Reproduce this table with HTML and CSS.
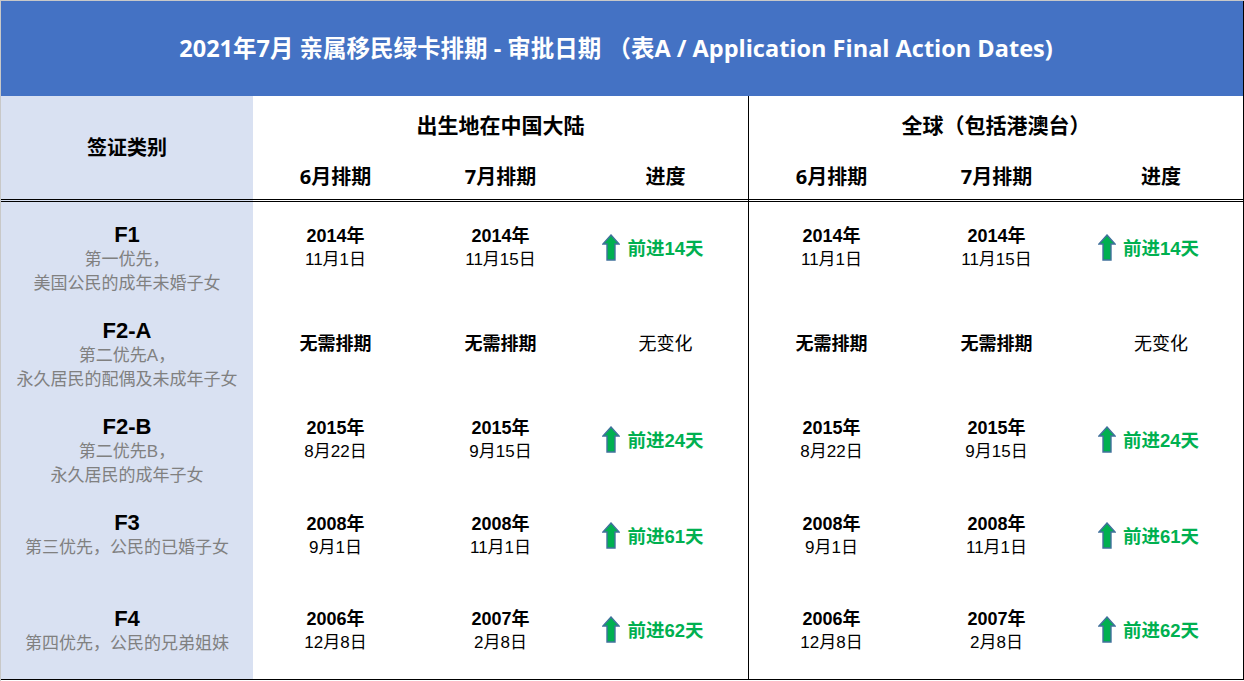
FILE: index.html
```html
<!DOCTYPE html>
<html lang="zh-CN">
<head>
<meta charset="utf-8">
<title>2021年7月 亲属移民绿卡排期</title>
<link rel="stylesheet" href="styles.css">
</head>
<body>
<div class="sheet">
  <div class="title">2021年7月 亲属移民绿卡排期 - 审批日期 （表A / Application Final Action Dates)</div>
  <div class="grid">
    <div class="hcat">签证类别</div>
    <div class="hgroup g1">出生地在中国大陆</div>
    <div class="hgroup g2">全球（包括港澳台）</div>
    <div class="hsub">6月排期</div>
    <div class="hsub">7月排期</div>
    <div class="hsub">进度</div>
    <div class="hsub sep">6月排期</div>
    <div class="hsub">7月排期</div>
    <div class="hsub">进度</div>

    <div class="cat"><div class="code">F1</div><div class="desc">第一优先，<br>美国公民的成年未婚子女</div></div>
    <div class="cell"><b>2014年</b><span class="day">11月1日</span></div>
    <div class="cell"><b>2014年</b><span class="day">11月15日</span></div>
    <div class="cell"><span class="up">前进14天</span></div>
    <div class="cell sep"><b>2014年</b><span class="day">11月1日</span></div>
    <div class="cell"><b>2014年</b><span class="day">11月15日</span></div>
    <div class="cell"><span class="up">前进14天</span></div>

    <div class="cat"><div class="code">F2-A</div><div class="desc">第二优先A，<br>永久居民的配偶及未成年子女</div></div>
    <div class="cell"><b>无需排期</b></div>
    <div class="cell"><b>无需排期</b></div>
    <div class="cell"><span>无变化</span></div>
    <div class="cell sep"><b>无需排期</b></div>
    <div class="cell"><b>无需排期</b></div>
    <div class="cell"><span>无变化</span></div>

    <div class="cat"><div class="code">F2-B</div><div class="desc">第二优先B，<br>永久居民的成年子女</div></div>
    <div class="cell"><b>2015年</b><span class="day">8月22日</span></div>
    <div class="cell"><b>2015年</b><span class="day">9月15日</span></div>
    <div class="cell"><span class="up">前进24天</span></div>
    <div class="cell sep"><b>2015年</b><span class="day">8月22日</span></div>
    <div class="cell"><b>2015年</b><span class="day">9月15日</span></div>
    <div class="cell"><span class="up">前进24天</span></div>

    <div class="cat"><div class="code">F3</div><div class="desc">第三优先，公民的已婚子女</div></div>
    <div class="cell"><b>2008年</b><span class="day">9月1日</span></div>
    <div class="cell"><b>2008年</b><span class="day">11月1日</span></div>
    <div class="cell"><span class="up">前进61天</span></div>
    <div class="cell sep"><b>2008年</b><span class="day">9月1日</span></div>
    <div class="cell"><b>2008年</b><span class="day">11月1日</span></div>
    <div class="cell"><span class="up">前进61天</span></div>

    <div class="cat last"><div class="code">F4</div><div class="desc">第四优先，公民的兄弟姐妹</div></div>
    <div class="cell last"><b>2006年</b><span class="day">12月8日</span></div>
    <div class="cell last"><b>2007年</b><span class="day">2月8日</span></div>
    <div class="cell last"><span class="up">前进62天</span></div>
    <div class="cell sep last"><b>2006年</b><span class="day">12月8日</span></div>
    <div class="cell last"><b>2007年</b><span class="day">2月8日</span></div>
    <div class="cell last"><span class="up">前进62天</span></div>
  </div>
</div>
</body>
</html>
```
FILE: styles.css
```css
html, body {
  margin: 0;
  padding: 0;
  background: #ffffff;
}
.sheet {
  width: 1244px;
  height: 681px;
  box-sizing: border-box;
  border-top: 1px solid #c8c8c8;
  border-left: 1px solid #c8c8c8;
  overflow: hidden;
}
.title {
  height: 95px;
  background: #4472c4;
  color: #ffffff;
  font-family: "Open Sans", "Noto Sans CJK SC", sans-serif;
  font-weight: 700;
  font-size: 23.5px;
  display: flex;
  align-items: center;
  justify-content: center;
  padding-right: 12px;
  padding-bottom: 4px;
  box-sizing: border-box;
  border-right: 1px solid #000;
}
.grid {
  display: grid;
  grid-template-columns: 252px 165px 165px 165px 166px 165px 164px;
  grid-template-rows: 56px 50px repeat(4, 96px) 94px;
  border-right: 1px solid #000;
  width: 1243px;
  box-sizing: border-box;
}
.hcat {
  grid-row: 1 / 3;
  grid-column: 1;
  background: #d9e1f2;
  border-bottom: 3px double #000;
  display: flex;
  align-items: center;
  justify-content: center;
  padding-bottom: 2px;
  box-sizing: border-box;
}
.hcat, .hgroup, .hsub {
  font-family: "Open Sans", "Noto Sans CJK SC", sans-serif;
  font-weight: 700;
  font-size: 20px;
  color: #000;
}
.hgroup {
  grid-row: 1;
  display: flex;
  align-items: center;
  justify-content: center;
  font-size: 21px;
  padding-bottom: 1px;
  box-sizing: border-box;
}
.g1 { grid-column: 2 / 5; }
.g2 { grid-column: 5 / 8; border-left: 1px solid #000; }
.hsub {
  grid-row: 2;
  border-bottom: 3px double #000;
  display: flex;
  align-items: center;
  justify-content: center;
  padding-bottom: 1px;
  box-sizing: border-box;
}
.sep { border-left: 1px solid #000; }
.cat {
  background: #d9e1f2;
  text-align: center;
  padding-top: 21px;
  box-sizing: border-box;
  font-family: "Liberation Sans", "Noto Sans CJK SC", sans-serif;
}
.code {
  font-weight: 700;
  font-size: 22px;
  line-height: 24px;
  color: #000;
}
.desc {
  font-size: 17px;
  line-height: 24px;
  color: #808080;
  margin-top: 1px;
}
.cell {
  display: flex;
  flex-direction: column;
  align-items: center;
  justify-content: center;
  padding-bottom: 4px;
  box-sizing: border-box;
  font-family: "Liberation Sans", "Noto Sans CJK SC", sans-serif;
  font-size: 18px;
  line-height: 24px;
  color: #000;
}
.cell b {
  font-weight: 700;
}
.day {
  font-size: 17px;
}
.last { border-bottom: 1px solid #000; }
.up {
  position: relative;
  color: #00b050;
  font-weight: 700;
  font-size: 18.5px;
  margin-top: 1px;
}
.up::before {
  content: "";
  position: absolute;
  left: -25px;
  top: -3px;
  width: 18px;
  height: 27px;
  background: url("data:image/svg+xml;utf8,<svg xmlns='http://www.w3.org/2000/svg' viewBox='0 0 18 27'><path d='M9 1 L17 10 L13 10 L13 26 L5 26 L5 10 L1 10 Z' fill='%2300b050' stroke='%2341719c' stroke-width='1.4' stroke-linejoin='miter'/></svg>") no-repeat center / contain;
}
```
